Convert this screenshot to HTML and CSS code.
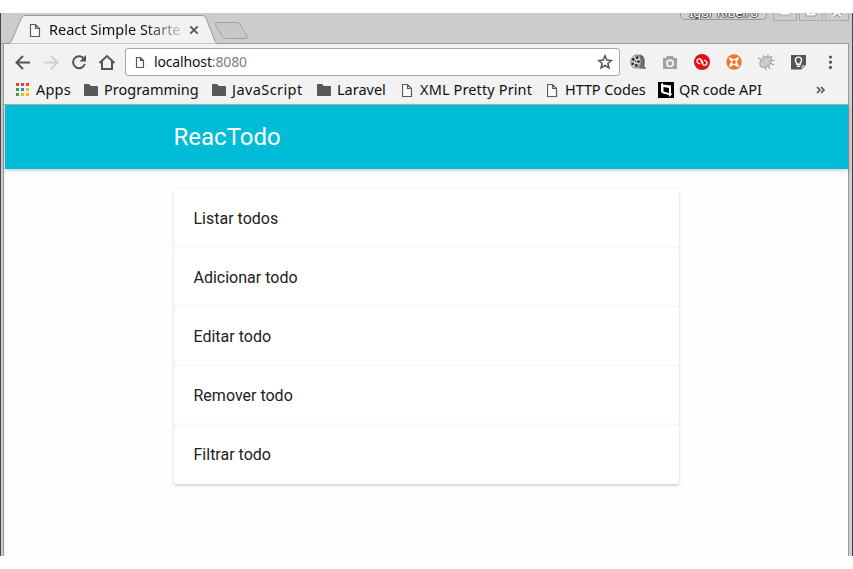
FILE: index.html
```html
<!DOCTYPE html>
<html lang="pt">
<head>
<meta charset="utf-8">
<title>React Simple Starter</title>
<link rel="stylesheet" href="styles.css">
</head>
<body>
<div class="window">
  <div class="tabstrip">
    <svg class="tabshape" width="260" height="31" viewBox="0 0 260 31">
      <path d="M1 30.500H7Q10.500 30.500 11.500 28L21.500 5Q22.500 2.500 25 2.500H202.500Q205 2.500 206 5L215 28Q216 30.500 218 30.500H260" fill="#f2f2f2" stroke="#999"/>
      <path d="M217 9.500H237Q239.500 9.500 240.500 12L247 23Q248 25.500 245.500 25.500H226Q223 25.500 222 23L215.500 12Q214.300 9.500 217 9.500Z" fill="#c8c8c8" stroke="#a2a2a2"/>
    </svg>
    <div class="tab">
      <svg class="page" width="12" height="15" viewBox="0 0 12 15"><path d="M1.500 1.500H6.500L10.500 5.500V13.500H1.500ZM6.500 1.500V5.500H10.500"/></svg>
      <span class="tabtitle">React Simple Starte</span>
      <svg class="line" width="10" height="10" viewBox="0 0 10 10"><path d="M1.300 1.300L8.700 8.700M8.700 1.300L1.300 8.700" stroke-width="1.800"/></svg>
    </div>
    <div class="controls">
      <div class="user"><span>Igor Ribeiro</span></div>
      <div class="control"><svg width="22" height="7" viewBox="0 0 22 7"><path d="M6 -1V2H16V-1" fill="#fff" stroke="#aaa"/></svg></div>
      <div class="control"><svg width="22" height="7" viewBox="0 0 22 7"><path d="M6 -3V3H16V-3M9 -1V0H13" fill="#fff" stroke="#999"/></svg></div>
      <div class="control"><svg width="22" height="7" viewBox="0 0 22 7"><path d="M7 3L11 -1L15 3" fill="none" stroke="#999" stroke-width="4"/><path d="M7 3L11 -1L15 3" fill="none" stroke="#fff" stroke-width="2"/></svg></div>
    </div>
  </div>
  <div class="inner">
    <div class="toolbar">
      <div class="nav">
        <svg class="line" width="28" height="20" viewBox="0 0 28 20"><path d="M21 10.500H8M14 4L7.500 10.500L14 17" stroke-width="2"/></svg>
        <svg class="line faded" width="28" height="20" viewBox="0 0 28 20"><path d="M7 10.500H20M14 4L20.500 10.500L14 17" stroke-width="2"/></svg>
        <svg class="line" width="28" height="20" viewBox="0 0 28 20"><path d="M19 6.800A6 6 0 1 0 19.800 12" stroke-width="2"/><path d="M21 3V9.500H14.500Z" fill="#555" stroke="none"/></svg>
        <svg class="line" width="28" height="20" viewBox="0 0 28 20"><path d="M6.500 11L14 4L21.500 11M9 9.500V17H19V9.500" stroke-width="2"/></svg>
      </div>
      <div class="omnibox">
        <svg class="page" width="10" height="13" viewBox="0 0 10 13"><path d="M1.500 1.500H5.500L8.500 4.500V11.500H1.500ZM5.500 1.500V4.500H8.500"/></svg>
        <span class="url">localhost<span class="port">:8080</span></span>
        <svg class="line star" width="16" height="16" viewBox="0 0 16 16"><path d="M8 1.800L9.800 6.100L14.300 6.500L10.900 9.400L12 14L8 11.500L4 14L5.100 9.400L1.700 6.500L6.200 6.100Z" stroke-width="1.500"/></svg>
      </div>
      <div class="extensions">
        <svg width="32" height="18" viewBox="0 0 32 18"><path d="M12 2L18 1.500Q22 2 23 7L22.500 13L24 15.500L20 16L13 15Z" fill="#999"/><path d="M18 2Q22 8 18.500 15M20 3Q23 8 21 14L23.500 15.500" fill="none" stroke="#555" stroke-width="1.200"/><ellipse cx="13.800" cy="8.500" rx="5" ry="6.500" transform="rotate(14 13.800 8.500)" fill="#d5d5d5" stroke="#777" stroke-width=".8"/><g fill="#333"><circle cx="15" cy="4.600" r="1.500"/><circle cx="11.300" cy="6.500" r="1.400"/><circle cx="16.500" cy="8.600" r="1.400"/><circle cx="10.800" cy="10.800" r="1.400"/><circle cx="14.300" cy="12.300" r="1.500"/><circle cx="13.600" cy="8.500" r=".8"/></g></svg>
        <svg width="32" height="18" viewBox="0 0 32 18"><path d="M9 5H12L13 3H19L20 5H23V16H9Z" fill="#a2a2a2"/><circle cx="16" cy="10.300" r="3.200" fill="#aaa" stroke="#f5f5f5" stroke-width="1.700"/></svg>
        <svg width="32" height="18" viewBox="0 0 32 18"><circle cx="16" cy="9" r="8" fill="#e20f1a"/><g transform="rotate(18 16 9)" fill="none" stroke="#fff" stroke-width="1.300" stroke-linecap="round"><path d="M17.300 9.800L14.800 7.300A2.300 2.300 0 0 0 11.500 10.500Q12.800 11.800 14.300 11.200"/><path d="M14.700 8.200L17.200 10.700A2.300 2.300 0 0 0 20.500 7.500Q19.200 6.200 17.700 6.800"/></g></svg>
        <svg width="32" height="18" viewBox="0 0 32 18"><circle cx="16" cy="9" r="7.700" fill="#f5742a"/><path d="M11.500 4.500L14.500 6H17.500L20.500 4.500L19.500 7.500V10.500L20.500 13.500L17.500 12.500H14.500L11.500 13.500L12.500 10.500V7.500Z" fill="#fff" stroke="#fff"/><circle cx="16" cy="9" r="1.900" fill="#f5742a"/><path d="M16 4.500V6M16 12V13.500M11.500 9H13M19 9H20.500" stroke="#f5742a" stroke-width="2"/></svg>
        <svg width="32" height="18" viewBox="0 0 32 18"><path d="M8 5L11 6.500M13 2.500L15 6M18 1.500V5M22 3L20 6M24.500 7L20 8M24 12L20 10M20 16L18 12M16 17L15 13" stroke="#999" stroke-width="1.200"/><ellipse cx="15.500" cy="9" rx="6.500" ry="4.600" transform="rotate(-42 15.500 9)" fill="#c4c4c4" stroke="#aaa"/><path d="M11 13L20 5M11.500 9L15.500 13M14 6L19 11" stroke="#e6e6e6" stroke-width=".7"/></svg>
        <svg width="32" height="18" viewBox="0 0 32 18"><path d="M9 2H24V12L19.500 16.500H9Z" fill="#555"/><path d="M24 12H19.500V16.500Z" fill="#aaa"/><path d="M14.800 10.200Q13.400 8.800 13.400 7.200A3.100 3.100 0 0 1 19.600 7.200Q19.600 8.800 18.200 10.200V11.300H14.800ZM14.800 13.200H18.200" fill="none" stroke="#fff" stroke-width="1.400"/></svg>
        <svg width="32" height="18" viewBox="0 0 32 18"><g fill="#555"><circle cx="16.500" cy="4" r="1.600"/><circle cx="16.500" cy="9.200" r="1.600"/><circle cx="16.500" cy="14.400" r="1.600"/></g></svg>
      </div>
    </div>
    <div class="bookmarks">
      <div class="bm apps"><svg width="14" height="14" viewBox="0 0 14 14"><path d="M0 0H3V3H0ZM5 0H8V3H5ZM10 0H13V3H10Z" fill="#ef3b36"/><path d="M0 5H3V8H0ZM0 10H3V13H0Z" fill="#30a05a"/><path d="M5 5H8V8H5Z" fill="#2b85f5"/><path d="M10 5H13V8H10ZM5 10H8V13H5ZM10 10H13V13H10Z" fill="#fbb80a"/></svg><span>Apps</span></div>
      <div class="bm prog"><svg class="folder" width="14" height="12" viewBox="0 0 14 12"><path d="M0 1Q0 0 1 0H5L7 2H13Q14 2 14 3V11Q14 12 13 12H1Q0 12 0 11Z"/></svg><span>Programming</span></div>
      <div class="bm js"><svg class="folder" width="14" height="12" viewBox="0 0 14 12"><path d="M0 1Q0 0 1 0H5L7 2H13Q14 2 14 3V11Q14 12 13 12H1Q0 12 0 11Z"/></svg><span>JavaScript</span></div>
      <div class="bm laravel"><svg class="folder" width="14" height="12" viewBox="0 0 14 12"><path d="M0 1Q0 0 1 0H5L7 2H13Q14 2 14 3V11Q14 12 13 12H1Q0 12 0 11Z"/></svg><span>Laravel</span></div>
      <div class="bm xml"><svg class="page" width="12" height="15" viewBox="0 0 12 15"><path d="M.5 1.500H5.500L9.500 5.500V13.500H.5ZM5.500 1.500V5.500H9.500"/></svg><span>XML Pretty Print</span></div>
      <div class="bm http"><svg class="page" width="12" height="15" viewBox="0 0 12 15"><path d="M.5 1.500H5.500L9.500 5.500V13.500H.5ZM5.500 1.500V5.500H9.500"/></svg><span>HTTP Codes</span></div>
      <div class="bm qr"><svg width="16" height="16" viewBox="0 0 16 16"><path d="M0 0H16V16H0Z"/><path d="M3 2L5 .8V2.500L13 3.500V11.500L14.500 12L11 15V13L5 11.500L3 10ZM5.500 5V9.500L11 11V6Z" fill="#fff" fill-rule="evenodd"/></svg><span>QR code API</span></div>
      <svg class="line more" width="10" height="8" viewBox="0 0 10 8"><path d="M1 1L4 4L1 7M5 1L8 4L5 7" stroke-width="1.700"/></svg>
    </div>
    <div class="site">
      <header class="appbar"><h1>ReacTodo</h1></header>
      <main class="cards">
        <div class="card">Listar todos</div>
        <div class="card">Adicionar todo</div>
        <div class="card">Editar todo</div>
        <div class="card">Remover todo</div>
        <div class="card">Filtrar todo</div>
      </main>
    </div>
  </div>
</div>
</body>
</html>
```
FILE: styles.css
```css
* { box-sizing: border-box; }
body { margin: 0; padding: 13px 0; height: 569px; background: #fff; overflow: hidden; font-family: "Noto Sans", sans-serif; color: #111; }
svg { display: block; flex: none; }
.window { height: 543px; background: #ccc; border: solid #484848; border-width: 0 1px; display: flex; flex-direction: column; }
.tabstrip { height: 31px; flex: none; display: flex; position: relative; margin: 0 3px 0 2px; border-bottom: 1px solid #999; }
.tabshape { position: absolute; left: -3px; top: 0; }
.tab { position: relative; display: flex; align-items: center; padding: 4px 0 0 26px; height: 30px; width: 210px; }
.tabtitle { width: 132px; margin: 0 8px; padding-bottom: 2px; overflow: hidden; white-space: nowrap; font-size: 14.5px; line-height: 20px; letter-spacing: -.02px; -webkit-mask-image: linear-gradient(90deg, #000 96px, transparent 140px); mask-image: linear-gradient(90deg, #000 96px, transparent 140px); }
.page { fill: #fafafa; stroke: #5a5a5a; stroke-width: 1.2; }
.line { fill: none; stroke: #555; }
.faded { stroke: #d0d0d0; }
.controls { margin-left: auto; display: flex; gap: 2px; }
.user { width: 87px; height: 7px; margin-right: 4px; border: 1px solid #999; border-top: 0; border-radius: 0 0 5px 5px; overflow: hidden; display: flex; justify-content: center; align-items: flex-end; }
.user span { font-size: 13px; line-height: 14px; color: #fff; height: 14px; letter-spacing: -.3px; text-shadow: 1px 0 #555, -1px 0 #555, 0 1px #555, 0 -1px #555; white-space: nowrap; }
.control { width: 24px; height: 8px; border: 1px solid #aaa; border-top: 0; overflow: hidden; }
.inner { flex: 1; margin: 0 3px 0 2px; border: solid #999; border-width: 0 1px; background: #f2f2f2; display: flex; flex-direction: column; min-height: 0; }
.toolbar { height: 34px; flex: none; display: flex; padding: 4px 0 0 5px; }
.nav { display: flex; align-items: center; height: 27px; width: 116px; }
.omnibox { width: 495px; flex: none; height: 28px; border: 1px solid #a6a6a6; border-radius: 3px; background: #fff; display: flex; align-items: center; padding: 0 6px 0 9px; }
.url { margin-left: 9px; font-size: 14px; line-height: 20px; letter-spacing: -.15px; color: #111; }
.port { color: #808080; }
.star { margin-left: auto; }
.extensions { display: flex; align-items: center; height: 28px; margin-left: 2px; }
.bookmarks { height: 27px; flex: none; display: flex; align-items: center; padding: 0 0 2px 12px; border-bottom: 1px solid #b3b3b3; font-size: 14.5px; line-height: 20px; white-space: nowrap; }
.bm { display: flex; align-items: center; flex: none; }
.bm span { margin-left: 6px; padding-bottom: 2px; }
.folder { fill: #585858; }
.apps { width: 68px; letter-spacing: .2px; }
.prog { width: 128px; }
.js { width: 105px; letter-spacing: .42px; }
.laravel { width: 85px; }
.xml { width: 145px; letter-spacing: .13px; }
.http { width: 111px; letter-spacing: -.1px; }
.qr { width: 158px; letter-spacing: -.08px; }
.bm.qr span { margin-left: 5px; }
.site { flex: 1; margin: 0 0 0 1px; background: #fefefe; min-height: 0; font-family: Roboto, sans-serif; }
.appbar { height: 64px; background: #00bcd7; padding-left: 168.5px; box-shadow: 0 1px 4px rgba(0,0,0,.25); }
.appbar h1 { margin: 0; font-size: 24px; font-weight: 400; line-height: 64px; color: #fff; }
.cards { width: 505px; margin: 20px 0 0 169px; }
.card { height: 59px; line-height: 59px; padding-left: 19.5px; background: #fff; border-radius: 2px; font-size: 16px; color: #212121; box-shadow: 0 2px 2px rgba(0,0,0,.08), 0 1px 4px rgba(0,0,0,.12); }
```
